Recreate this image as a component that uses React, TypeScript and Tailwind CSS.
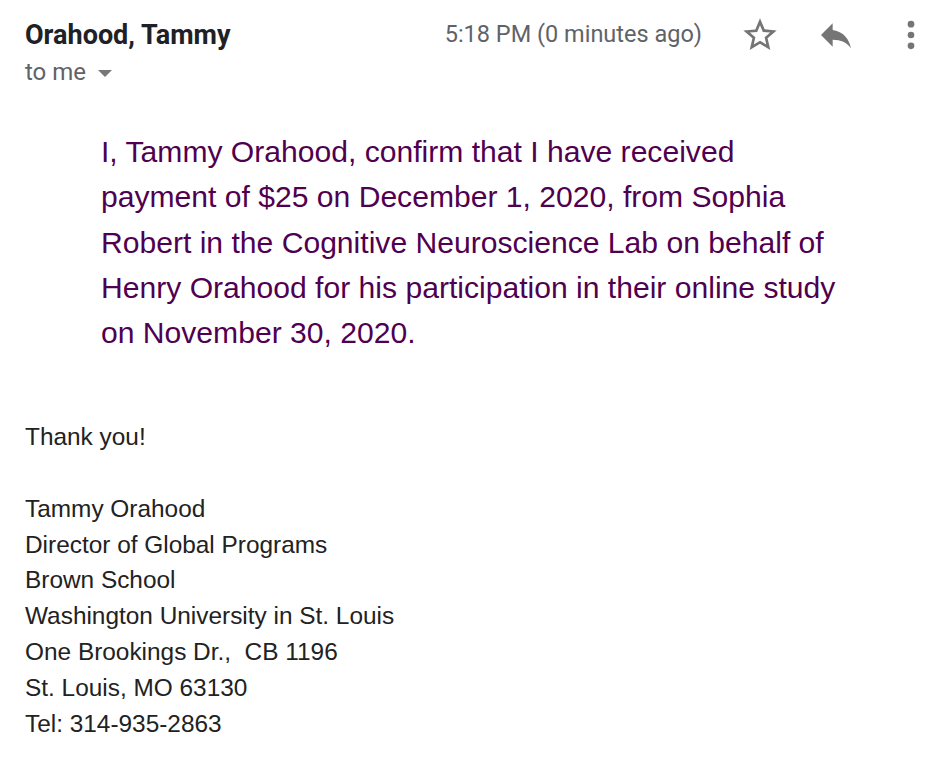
import React from 'react';

const StarIcon = () => (
  <svg viewBox="0 0 24 24" className="w-[40px] h-[40px]" fill="#757575">
    <path d="M22 9.24l-7.19-.62L12 2 9.19 8.63 2 9.24l5.46 4.73L5.82 21 12 17.27 18.18 21l-1.63-7.03L22 9.24zM12 15.4l-3.76 2.27 1-4.28-3.32-2.88 4.38-.38L12 6.1l1.71 4.04 4.38.38-3.32 2.88 1 4.28L12 15.4z" />
  </svg>
);

const ReplyIcon = () => (
  <svg viewBox="0 0 24 24" className="w-[40px] h-[40px]" fill="#757575">
    <path d="M10 9V5l-7 7 7 7v-4.1c5 0 8.5 1.6 11 5.1-1-5-4-10-11-11z" />
  </svg>
);

const MoreIcon = () => (
  <svg viewBox="0 0 24 24" className="w-[40px] h-[40px]" fill="#757575">
    <circle cx="12" cy="5.5" r="2" />
    <circle cx="12" cy="12" r="2" />
    <circle cx="12" cy="18.5" r="2" />
  </svg>
);

const signature = [
  'Tammy Orahood',
  'Director of Global Programs',
  'Brown School',
  'Washington University in St. Louis',
  'One Brookings Dr.,\u00a0 CB 1196',
  'St. Louis, MO 63130',
  'Tel: 314-935-2863',
];

export default function App() {
  return (
    <div className="w-[936px] h-[760px] bg-white overflow-hidden pl-[25px]">
      {/* Header */}
      <div className="flex items-start pt-[15px]">
        <div className="flex-1 flex flex-col">
          <div className="h-[40px] flex items-center text-[27px] font-bold text-[#202124] [font-family:Roboto,'Liberation_Sans',sans-serif]">
            Orahood, Tammy
          </div>
          <div className="h-[34px] flex items-center gap-[12px] text-[24px] text-[#5f6368] [font-family:Roboto,'Liberation_Sans',sans-serif]">
            <span>to me</span>
            <span className="w-0 h-0 border-l-[7px] border-r-[7px] border-t-[7px] border-l-transparent border-r-transparent border-t-[#777] mt-[2px]" />
          </div>
        </div>
        <div className="flex items-center h-[40px]">
          <span className="text-[23.5px] text-[#5f6368] mr-[38px] [font-family:Roboto,'Liberation_Sans',sans-serif]">
            5:18 PM (0 minutes ago)
          </span>
          <StarIcon />
          <span className="w-[36px]" />
          <ReplyIcon />
          <span className="w-[35px]" />
          <MoreIcon />
          <span className="w-[5px]" />
        </div>
      </div>

      {/* Quoted confirmation */}
      <div className="ml-[76px] mt-[40px] w-[748px] text-[30.1px] leading-[45.25px] text-[#500050] [font-family:'Liberation_Sans',Arial,sans-serif]">
        I, Tammy Orahood, confirm that I have received payment of $25 on December 1, 2020, from Sophia
        Robert in the Cognitive Neuroscience Lab on behalf of Henry Orahood for his participation in
        their online study on November 30, 2020.
      </div>

      {/* Body */}
      <div className="mt-[64px] text-[24.4px] leading-[35.8px] text-[#222] [font-family:'Liberation_Sans',Arial,sans-serif]">
        <p>Thank you!</p>
        <p>&nbsp;</p>
        {signature.map((line, i) => (
          <p key={i}>{line}</p>
        ))}
      </div>
    </div>
  );
}
